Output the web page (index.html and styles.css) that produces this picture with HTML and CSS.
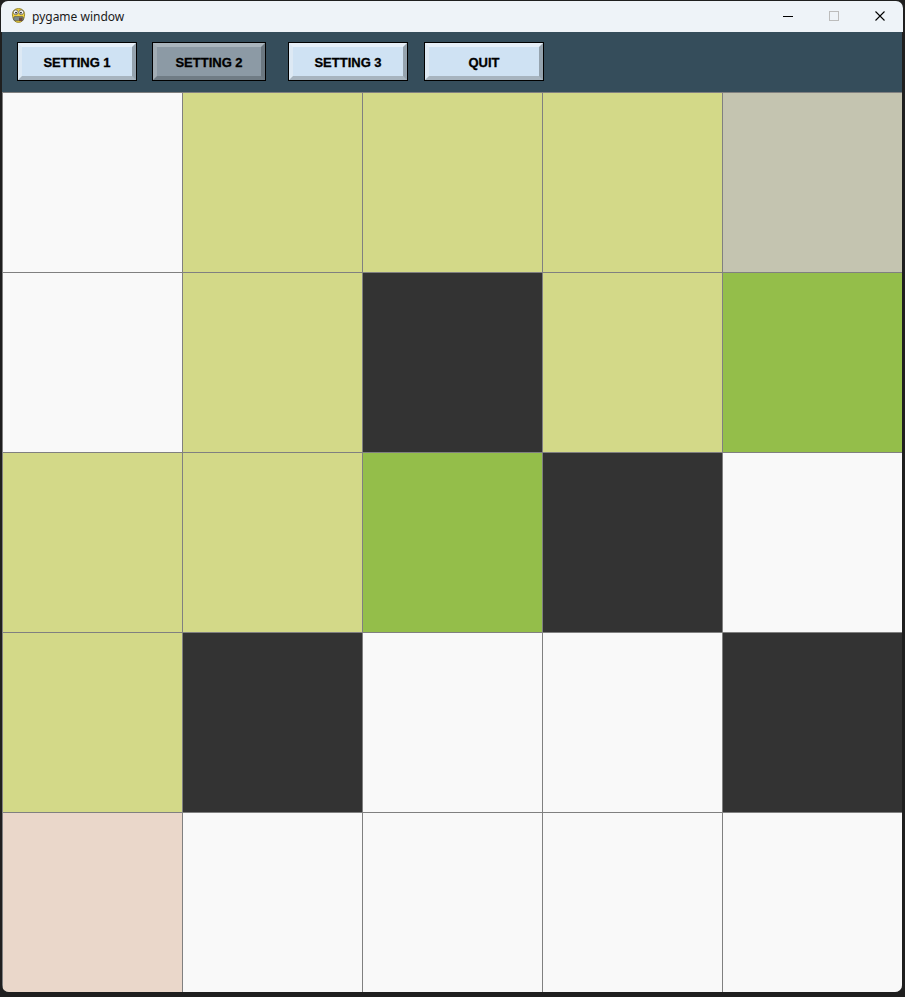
FILE: index.html
```html
<!DOCTYPE html>
<html>
<head>
<meta charset="utf-8">
<link rel="stylesheet" href="styles.css">
</head>
<body>
<div class="window">
  <div class="titlebar">
    <svg class="appicon" width="17" height="17" viewBox="0 0 16 16">
      <path d="M2.5 9 C1.5 5 3.5 1.5 8 1.5 C12.5 1.5 14.5 5 13.5 9 C13 12.5 11 14.5 8 14.5 C5 14.5 3 12.5 2.5 9 Z" fill="#f2d23a" stroke="#8a7a20" stroke-width="0.8"/>
      <circle cx="5.4" cy="5" r="2.2" fill="#fff" stroke="#555" stroke-width="0.7"/>
      <circle cx="10.6" cy="5" r="2.2" fill="#fff" stroke="#555" stroke-width="0.7"/>
      <circle cx="5.7" cy="5.3" r="0.9" fill="#222"/>
      <circle cx="10.3" cy="5.3" r="0.9" fill="#222"/>
      <rect x="3.5" y="9" width="9" height="3.8" rx="1" fill="#7d8a8a" stroke="#444" stroke-width="0.5"/>
      <rect x="8.5" y="10" width="3.2" height="3.2" fill="#6a4a3a"/>
    </svg>
    <span class="title">pygame window</span>
    <div class="controls">
      <span class="ctl min"><svg width="10" height="10" viewBox="0 0 10 10"><path d="M0 5.5H10" stroke="#000" stroke-width="1"/></svg></span>
      <span class="ctl max"><svg width="10" height="10" viewBox="0 0 10 10"><rect x="0.5" y="0.5" width="9" height="9" fill="none" stroke="#bcbcbc" stroke-width="1"/></svg></span>
      <span class="ctl close"><svg width="10" height="10" viewBox="0 0 10 10"><path d="M0.5 0.5L9.5 9.5M9.5 0.5L0.5 9.5" stroke="#000" stroke-width="1.1"/></svg></span>
    </div>
  </div>
  <div class="client">
    <div class="toolbar">
      <div class="btn b1"><div class="face">SETTING 1</div></div>
      <div class="btn b2 pressed"><div class="face">SETTING 2</div></div>
      <div class="btn b3"><div class="face">SETTING 3</div></div>
      <div class="btn b4"><div class="face">QUIT</div></div>
    </div>
    <div class="grid">
      <div class="cell w"></div><div class="cell y"></div><div class="cell y"></div><div class="cell y"></div><div class="cell g"></div>
      <div class="cell w"></div><div class="cell y"></div><div class="cell d"></div><div class="cell y"></div><div class="cell gr"></div>
      <div class="cell y"></div><div class="cell y"></div><div class="cell gr"></div><div class="cell d"></div><div class="cell w"></div>
      <div class="cell y"></div><div class="cell d"></div><div class="cell w"></div><div class="cell w"></div><div class="cell d"></div>
      <div class="cell p"></div><div class="cell w"></div><div class="cell w"></div><div class="cell w"></div><div class="cell w"></div>
    </div>
  </div>
</div>
</body>
</html>
```
FILE: styles.css
```css
html, body {
  margin: 0;
  padding: 0;
  background: #1f1f1f;
  width: 905px;
  height: 997px;
  overflow: hidden;
}
.window {
  width: 905px;
}
.titlebar {
  box-sizing: border-box;
  margin: 1px 0 0 1px;
  width: 902px;
  height: 31px;
  background: #eef3f8;
  border-radius: 7px 7px 0 0;
  display: flex;
  align-items: center;
  font-family: "Segoe UI", "Noto Sans", "Open Sans", sans-serif;
  font-size: 12px;
  color: #1a1a1a;
}
.appicon {
  margin-left: 9px;
  margin-top: -2px;
}
.title {
  margin-left: 5px;
  margin-top: -1px;
}
.controls {
  margin-left: auto;
  display: flex;
  align-items: center;
  height: 100%;
}
.ctl {
  width: 46px;
  height: 100%;
  display: flex;
  align-items: center;
  justify-content: center;
}
.ctl svg { display: block; margin-top: -1px; }
.client {
  margin-left: 2px;
  width: 900px;
  border-radius: 0 0 7px 7px;
  overflow: hidden;
}
.toolbar {
  height: 60px;
  background: #354d5b;
  display: flex;
  align-items: flex-start;
  box-sizing: border-box;
  padding-top: 10px;
}
.btn {
  box-sizing: border-box;
  height: 39px;
  width: 120px;
  border: 1px solid #000;
}
.b1 { margin-left: 15px; }
.b2 { margin-left: 15px; width: 114px; }
.b3 { margin-left: 22px; }
.b4 { margin-left: 16px; }
.face {
  box-sizing: border-box;
  height: 100%;
  border-style: solid;
  border-width: 4px;
  border-color: #e6eff8 #95a3ae #a7b4bf #dde9f4;
  background: #cfe2f3;
  display: flex;
  align-items: center;
  justify-content: center;
  font-family: "Liberation Sans", Arial, sans-serif;
  font-weight: bold;
  font-size: 13px;
  -webkit-text-stroke: 0.3px #000;
  color: #000;
  padding-top: 1px;
}
.pressed .face {
  background: #8c9aa5;
  border-color: #a9b4bc #6b7780 #707c85 #a1acb4;
}
.grid {
  display: grid;
  grid-template-columns: repeat(5, 179px);
  grid-auto-rows: 179px;
  gap: 1px;
  padding: 1px 0 0 1px;
  background: #808080;
  height: 900px;
  box-sizing: border-box;
}
.w { background: #f9f9f9; }
.y { background: #d3d988; }
.g { background: #c4c4b0; }
.d { background: #333333; }
.gr { background: #94be4a; }
.p { background: #ead7ca; }
```
